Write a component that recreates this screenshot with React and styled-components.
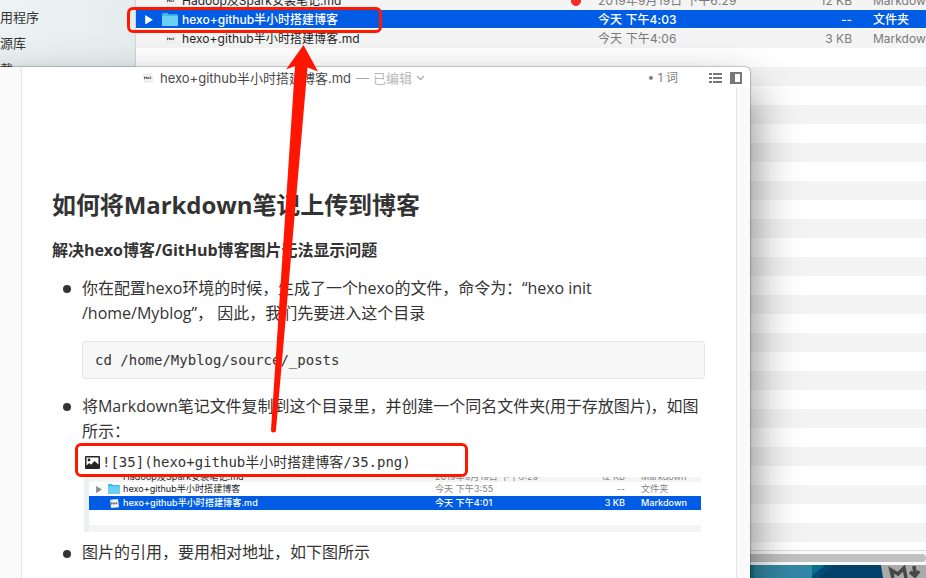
import React from 'react';
import styled, { createGlobalStyle, css } from 'styled-components';

const Global = createGlobalStyle`
  * { box-sizing: border-box; }
  body { margin: 0; overflow: hidden; }
  h1, h2, p, ul { margin: 0; padding: 0; font-size: inherit; }
`;

const ui = `Inter, "Noto Sans CJK SC", sans-serif`;
const prose = `"Open Sans", "Noto Sans CJK SC", sans-serif`;

const Desktop = styled.main`
  position: relative;
  width: 926px;
  height: 578px;
  overflow: hidden;
  background: #02426a;
  font-family: ${ui};
`;

const Finder = styled.section`
  display: grid;
  grid-template-columns: 136px 1fr;
  height: 565px;
  background: #fff;
`;

const Sidebar = styled.nav`
  display: flex;
  flex-direction: column;
  padding-top: 4px;
  background: linear-gradient(100deg, #edf3f4, #dfe9eb);
  border-right: 1px solid #cfd6d8;
  color: #333;
  font-size: 13px;
  line-height: 26px;
`;

const FileList = styled.div`
  display: flex;
  flex-direction: column;
  min-width: 0;
  overflow: hidden;
  background: repeating-linear-gradient(#f4f4f4 0 19px, #fff 19px 38px) 0 -9px;
`;

const FileRow = styled.div`
  display: grid;
  grid-template-columns: 26px 20px 386px 30px 155px 99px 1fr;
  align-items: center;
  height: 19px;
  flex: none;
  white-space: nowrap;
  font-size: 12px;
  line-height: 18px;
  color: #7a7a7a;
  ${p => p.$cut && css`margin-top: -9px;`}
  ${p => p.$selected && css`
    color: #fff;
    font-weight: 500;
    background: linear-gradient(#005ce4 18px, #fff 18px);
  `}
`;

const Cell = styled.span`
  letter-spacing: ${p => p.$track || 0}px;
  color: ${p => p.$dark ? '#242424' : 'inherit'};
  text-align: ${p => p.$right ? 'right' : 'left'};
  padding-left: ${p => p.$pad || 0}px;
`;

const IconCell = styled.span`
  display: flex;
  align-items: center;
  padding-left: ${p => p.$pad || 0}px;
`;

const Dot = styled.i`
  width: 10px;
  height: 10px;
  border-radius: 50%;
  background: #ff2d2d;
  border: 1px solid #ea2020;
`;

const ScrollTrack = styled.div`
  margin-top: auto;
  height: 15px;
  flex: none;
  border-top: 1px solid #dcdcdc;
  background: #fafafa;
  padding-top: 3px;
`;

const ScrollThumb = styled.div`
  height: 8px;
  border-radius: 4px;
  background: #c1c1c1;
`;

const Wallpaper = styled.footer`
  display: flex;
  justify-content: flex-end;
  height: 13px;
  svg { display: block; }
`;

const Editor = styled.section`
  position: absolute;
  left: -30px;
  top: 67px;
  width: 780px;
  height: 560px;
  padding-left: 30px;
  display: flex;
  flex-direction: column;
  background: #fff;
  border-radius: 5px;
  box-shadow: 0 0 1px 1px rgba(0,0,0,.2), 0 24px 48px rgba(0,0,0,.52);
`;

const TitleBar = styled.header`
  display: flex;
  align-items: center;
  height: 20px;
  flex: none;
  margin-left: 21px;
  padding: 2px 8px 0 121px;
  border-left: 1px solid #e4e4e4;
  color: #4a4a4a;
  font-size: 13px;
  line-height: 18px;
  white-space: nowrap;
`;

const TitleText = styled.span`
  margin-left: ${p => p.$gap || 0}px;
  color: ${p => p.$color || 'inherit'};
  font-size: 13px;
`;

const TitleTools = styled.div`
  display: flex;
  align-items: center;
  margin-left: auto;
  color: #7d7d7d;
  font-size: 12px;
  svg { display: block; }
`;

const Body = styled.div`
  display: grid;
  grid-template-columns: 22px 1fr 14px;
  flex: 1;
  min-height: 0;
`;

const Gutter = styled.div`
  background: #fafafa;
  border-${p => p.$side}: 1px solid #e6e6e6;
  ${p => p.$side === 'right' && css`margin-top: -20px;`}
`;

const Article = styled.article`
  padding: 99px 31px 0 30px;
  font-family: ${prose};
  font-size: 16px;
  line-height: 25.6px;
  color: #333;
`;

const Title = styled.h1`
  font-size: 24px;
  line-height: 38px;
  font-weight: 700;
  letter-spacing: -0.08px;
  white-space: nowrap;
`;

const Subtitle = styled.h2`
  margin-top: 14px;
  font-size: 16px;
  letter-spacing: -0.03px;
  line-height: 25px;
  font-weight: 700;
  white-space: nowrap;
`;

const List = styled.ul`
  list-style: none;
  margin-top: 12px;
`;

const Item = styled.li`
  display: grid;
  grid-template-columns: 30px 1fr;
  margin-top: ${p => p.$gap || 0}px;
`;

const Bullet = styled.i`
  width: 8px;
  height: 8px;
  margin: 9.5px 0 0 11px;
  border-radius: 50%;
  background: #333;
`;

const Line = styled.p`
  white-space: pre;
  letter-spacing: ${p => p.$track || 0}px;
  ${p => p.$lead && css`padding-top: 1px; line-height: 24.6px;`}
`;

const CodeBlock = styled.pre`
  margin: 15px 0 0;
  height: 38px;
  width: 623px;
  padding: 0 12px;
  border: 1px solid #e4e7ea;
  border-radius: 3px;
  background: #f7f7f7;
  font: 14px/36px "DejaVu Sans Mono", monospace;
`;

const ImageSource = styled.div`
  display: flex;
  align-items: center;
  height: 33px;
  gap: 2px;
  padding: 3px 0 0 3px;
  white-space: pre;
  font: 14px/20px "DejaVu Sans Mono", "Noto Sans CJK SC", monospace;
`;

const Preview = styled.figure`
  margin: 0 0 0 2px;
  width: 617px;
  height: 55px;
  padding-left: 5px;
  overflow: hidden;
  background: #e9f1f3;
  font-family: ${ui};
`;

const PreviewRow = styled.div`
  display: grid;
  grid-template-columns: 19px 15px 291px 21px 126px 64px 16px 1fr;
  align-items: center;
  height: ${p => p.$h || 14}px;
  overflow: hidden;
  font-size: 9.1px;
  line-height: 14px;
  color: #858585;
  white-space: nowrap;
  background: ${p => p.$alt ? '#f4f4f4' : '#fff'};
  ${p => p.$first && css`align-items: start; line-height: 0;`}
  ${p => p.$selected && css`background: #005ce4; color: #fff; font-weight: 500;`}
`;

const Frame = styled.div`
  position: absolute;
  left: ${p => p.$x}px;
  top: ${p => p.$y}px;
  width: ${p => p.$w}px;
  height: ${p => p.$h}px;
  border: 3px solid #ff1800;
  border-radius: 6px;
`;

const Arrow = styled.svg`
  position: absolute;
  left: 265px;
  top: 40px;
`;

const Folder = ({ w = 16 }) => (
  <svg width={w} height={w * 0.82} viewBox="0 0 16 13">
    <path d="M0 1Q0 0 1 0h4.5l1.3 1.3H15q1 0 1 1V12q0 1-1 1H1q-1 0-1-1z" fill="#43b8e4" />
    <path d="M0 3h16v9q0 1-1 1H1q-1 0-1-1z" fill="#6bd0f6" />
  </svg>
);

const MdFile = ({ w = 10 }) => (
  <svg width={w} height={w} viewBox="0 0 10 10">
    <path d="M.3 1.2 8.6 0 10 8.8 1.4 10z" fill="#f2f2f2" stroke="#dedede" strokeWidth=".4" />
    <path d="M1.5 6.2V3.8l1 1.1 1-1.1v2.2M5 4v2M4.4 5.2h1.4M7.2 3.4v2.2m-.8-.8.8.9.8-.9" fill="none" stroke="#555" strokeWidth=".9" />
  </svg>
);

const Disclosure = ({ w = 7, color = '#fff' }) => (
  <svg width={w} height={w * 1.2} viewBox="0 0 8 10"><path d="M0 0v10l8-5z" fill={color} /></svg>
);

export default function App() {
  return (
    <Desktop>
      <Global />
      <Finder>
        <Sidebar>
          <span>用程序</span>
          <span>源库</span>
          <span>载</span>
        </Sidebar>
        <FileList>
          <FileRow $cut>
            <span />
            <IconCell $pad={4}><MdFile /></IconCell>
            <Cell $dark>Hadoop及Spark安装笔记.md</Cell>
            <IconCell $pad={3}><Dot /></IconCell>
            <Cell $track={0.15}>2019年9月19日 下午6:29</Cell>
            <Cell $right>12 KB</Cell>
            <Cell $pad={21}>Markdown</Cell>
          </FileRow>
          <FileRow $selected>
            <IconCell $pad={9}><Disclosure w={8} /></IconCell>
            <IconCell><Folder /></IconCell>
            <Cell>hexo+github半小时搭建博客</Cell>
            <span />
            <Cell $track={0.08}>今天 下午4:03</Cell>
            <Cell $right>--</Cell>
            <Cell $pad={21}>文件夹</Cell>
          </FileRow>
          <FileRow>
            <span />
            <IconCell $pad={4}><MdFile /></IconCell>
            <Cell $dark $track={0.07}>hexo+github半小时搭建博客.md</Cell>
            <span />
            <Cell $track={0.1}>今天 下午4:06</Cell>
            <Cell $right>3 KB</Cell>
            <Cell $pad={21}>Markdown</Cell>
          </FileRow>
          <ScrollTrack><ScrollThumb /></ScrollTrack>
        </FileList>
      </Finder>
      <Wallpaper>
        <svg width="176" height="13">
          <rect width="176" height="13" fill="#034b74" />
          <rect width="4" height="13" fill="#147b87" />
          <path d="M4 0h58v13H4z" fill="#3487a4" />
          <path d="M62 0h13L62 11z" fill="#07708c" />
          <path d="M70 13 84 0h47l2 13z" fill="#024168" />
          <path d="m131 0 2 13h43V0z" fill="#aaa" />
          <path d="m143 13-2-8 7 4 6-6 2 10M164 1l1 9m-5-3 5 4 4-5" fill="none" stroke="#484848" strokeWidth="3.6" />
        </svg>
      </Wallpaper>

      <Editor>
        <TitleBar>
          <MdFile w={10} />
          <TitleText $gap={7}>hexo+github半小时搭建博客.md</TitleText>
          <TitleText $gap={5} $color="#aaa">—</TitleText>
          <TitleText $gap={4} $color="#b8b8b8">已编辑</TitleText>
          <TitleText as="svg" $gap={4} width="9" height="6" viewBox="0 0 9 6">
            <path d="m1 1 3.5 3.5L8 1" fill="none" stroke="#b0b0b0" strokeWidth="1.3" />
          </TitleText>
          <TitleTools>
            <span>• 1 词</span>
            <TitleText as="svg" $gap={31} width="13" height="10" viewBox="0 0 13 10">
              <path d="M0 1h3M4 1h9M0 5h3M4 5h9M0 9h3M4 9h9" stroke="#777" strokeWidth="2" />
            </TitleText>
            <TitleText as="svg" $gap={8} width="12" height="12" viewBox="0 0 12 12">
              <path d="M0 0h12v12H0zM5 2v8h5V2z" fill="#777" fillRule="evenodd" />
            </TitleText>
          </TitleTools>
        </TitleBar>
        <Body>
          <Gutter $side="right" />
          <Article>
            <Title>如何将Markdown笔记上传到博客</Title>
            <Subtitle>解决hexo博客/GitHub博客图片无法显示问题</Subtitle>
            <List>
              <Item>
                <Bullet />
                <div>
                  <Line $lead $track={-0.05}>你在配置hexo环境的时候，生成了一个hexo的文件，命令为：“hexo init</Line>
                  <Line>/home/Myblog”， 因此，我们先要进入这个目录</Line>
                  <CodeBlock>cd /home/Myblog/source/_posts</CodeBlock>
                </div>
              </Item>
              <Item $gap={14}>
                <Bullet />
                <div>
                  <Line $lead $track={-0.02}>将Markdown笔记文件复制到这个目录里，并创建一个同名文件夹(用于存放图片)，如图</Line>
                  <Line>所示：</Line>
                  <ImageSource>
                    <svg width="15" height="13" viewBox="0 0 15 13">
                      <path d="M1 0h13q1 0 1 1v11q0 1-1 1H1q-1 0-1-1V1q0-1 1-1z" fill="#252525" />
                      <path d="M1.5 1.5h12v7L9.5 5 6 8.7 4.2 7 1.5 9.5z" fill="#fff" />
                      <circle cx="4" cy="4" r="1.4" fill="#252525" />
                    </svg>
                    <span>![35](hexo+github半小时搭建博客/35.png)</span>
                  </ImageSource>
                  <Preview>
                    <PreviewRow $alt $first $h={5}>
                      <span />
                      <span />
                      <Cell $dark>Hadoop及Spark安装笔记.md</Cell>
                      <span />
                      <Cell>2019年9月19日 下午6:29</Cell>
                      <Cell $right>12 KB</Cell>
                      <span />
                      <Cell>Markdown</Cell>
                    </PreviewRow>
                    <PreviewRow>
                      <IconCell $pad={7}><Disclosure w={6} color="#8a8a8a" /></IconCell>
                      <Folder w={12} />
                      <Cell $dark>hexo+github半小时搭建博客</Cell>
                      <span />
                      <Cell>今天 下午3:55</Cell>
                      <Cell $right>--</Cell>
                      <span />
                      <Cell>文件夹</Cell>
                    </PreviewRow>
                    <PreviewRow $selected>
                      <span />
                      <IconCell $pad={2}><MdFile w={9} /></IconCell>
                      <Cell>hexo+github半小时搭建博客.md</Cell>
                      <span />
                      <Cell>今天 下午4:01</Cell>
                      <Cell $right>3 KB</Cell>
                      <span />
                      <Cell>Markdown</Cell>
                    </PreviewRow>
                    <PreviewRow $h={15} />
                    <PreviewRow $alt $h={7} />
                  </Preview>
                </div>
              </Item>
              <Item $gap={8}>
                <Bullet />
                <Line>图片的引用，要用相对地址，如下图所示</Line>
              </Item>
            </List>
          </Article>
          <Gutter $side="left" />
        </Body>
      </Editor>

      <Frame $x={127} $y={7} $w={255} $h={26} />
      <Frame $x={75} $y={443} $w={393} $h={34} />
      <Arrow width="60" height="400">
        <path d="M38.5 5 21 29.5l9-3.5L6 390q0 2.5 2.5 2.5T11 390L42.5 27.5 53 31.5z" fill="#ff1500" />
      </Arrow>
    </Desktop>
  );
}
